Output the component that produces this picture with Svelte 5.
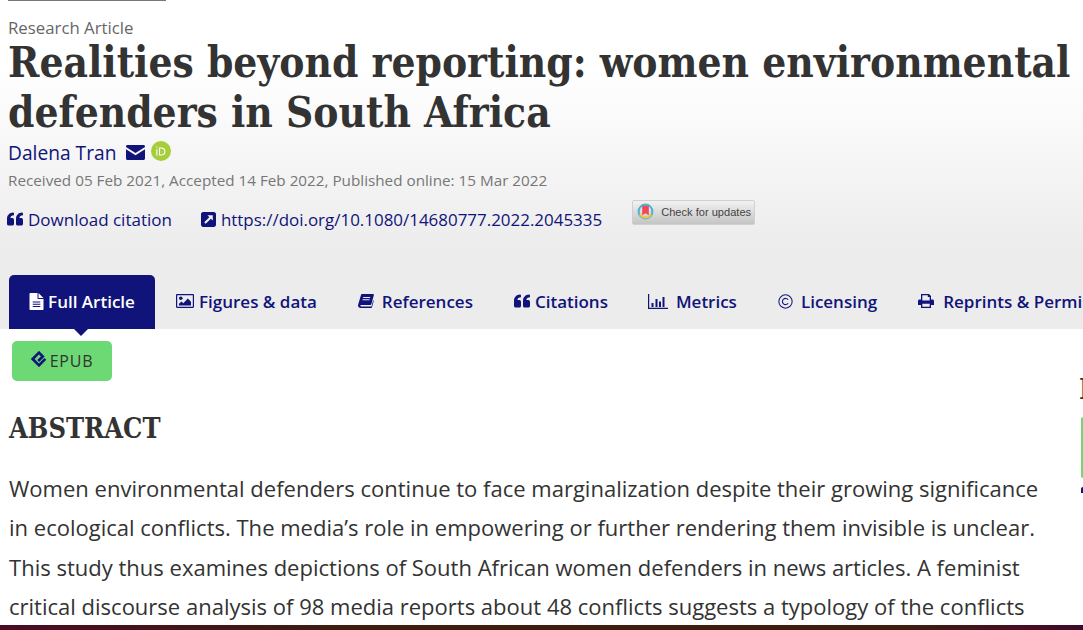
<script>
  const tabs = [
    { label: 'Figures & data', icon: 'image' },
    { label: 'References', icon: 'book' },
    { label: 'Citations', icon: 'quote' },
    { label: 'Metrics', icon: 'chart' },
    { label: 'Licensing', icon: 'copy' },
    { label: 'Reprints & Permissions', icon: 'print' }
  ];
</script>

{#snippet icon(name)}
  {#if name === 'quote'}
    <svg class="ico quote" viewBox="0 0 16 12" preserveAspectRatio="none"><path d="M7 1.500v1.200C4.800 2.700 3.400 3.600 3.400 5.200H5.400C6.300 5.200 7 5.900 7 6.800V10c0 .9-.7 1.600-1.600 1.600H1.600C.7 11.600 0 10.900 0 10V5.600C0 3 2.600 .4 6 .4 6.600 .4 7 .9 7 1.500ZM16 1.500v1.200C13.800 2.700 12.400 3.600 12.400 5.200H14.400C15.300 5.200 16 5.900 16 6.800V10c0 .9-.7 1.600-1.600 1.600H10.600C9.700 11.600 9 10.900 9 10V5.600C9 3 11.600 .4 15 .4 15.600 .4 16 .9 16 1.500Z"/></svg>
  {:else if name === 'image'}
    <svg class="ico image" viewBox="0 0 18 14"><path fill-rule="evenodd" d="M1.200 0H16.800C17.500 0 18 .5 18 1.200V12.800C18 13.500 17.500 14 16.800 14H1.200C.5 14 0 13.500 0 12.800V1.200C0 .5 .5 0 1.200 0ZM1.200 1.200V12.800H16.800V1.200Z"/><circle cx="4.800" cy="4.200" r="1.800"/><path d="M3 11.500V9.800L5.500 7.500 7.300 9.200 11.800 4.400 15 7.800V11.500Z"/></svg>
  {:else if name === 'book'}
    <svg class="ico book" viewBox="0 0 16 14"><path d="M4.300 0H15C15.700 0 16 .5 15.800 1.200L13.400 10.200C13.200 10.800 12.900 11 12.300 11H3.200C2.600 11 2.300 11.300 2.300 11.800 2.300 12.300 2.700 12.600 3.200 12.600H13.500L15.200 6.200 15.800 6.800 13.900 13.500C13.800 13.800 13.600 14 13.300 14H2.600C1.200 14 0 13 0 11.600 0 11.200 .1 10.800 .2 10.400L2.900 1.200C3.100 .5 3.600 0 4.300 0ZM5.300 3 5 4H12L12.300 3ZM4.700 5.300 4.400 6.300H11.400L11.700 5.300Z" fill-rule="evenodd"/></svg>
  {:else if name === 'chart'}
    <svg class="ico chart" viewBox="0 0 20 15"><path d="M0 0H1.200V13.800H20V15H0ZM3.500 9H5.500V13H3.500ZM7.500 5H9.500V13H7.500ZM11 7.500H13V13H11ZM14.500 3H16.500V13H14.500Z"/></svg>
  {:else if name === 'copy'}
    <svg class="ico copy" viewBox="0 0 16 16"><circle cx="8" cy="8" r="7.100" fill="none" stroke="currentColor" stroke-width="1.100"/><path d="M10.800 6.200A3.300 3.300 0 1 0 10.800 9.800" fill="none" stroke="currentColor" stroke-width="1.200"/></svg>
  {:else if name === 'print'}
    <svg class="ico print" viewBox="0 0 16 14"><path fill-rule="evenodd" d="M3 0H11L13 2V5.500H14.500C15.300 5.500 16 6.200 16 7V11H13V14H3V11H0V7C0 6.200 .7 5.500 1.500 5.500H3ZM4.300 1.300V6.500H11.700V3H9.800V1.300ZM4.300 9.800V12.700H11.700V9.800Z"/></svg>
  {/if}
{/snippet}

<div class="page">
  <header class="head">
    <div class="topline"></div>
    <div class="kicker">Research Article</div>
    <h1>Realities beyond reporting: women environmental defenders in South Africa</h1>
    <div class="author">
      <span>Dalena Tran</span>
      <svg class="mail" viewBox="0 0 19 15"><path d="M1.500 0H17.500C18.300 0 19 .7 19 1.500V2L9.500 8 0 2V1.500C0 .7 .7 0 1.500 0ZM0 4.200 9.500 10.200 19 4.200V13.500C19 14.300 18.300 15 17.500 15H1.500C.7 15 0 14.300 0 13.500Z"/></svg>
      <svg class="orcid" viewBox="0 0 20 20">
        <circle cx="10" cy="10" r="10" fill="#a6ce39"/>
        <path d="M5.300 8.200H6.400V14.600H5.300ZM5.850 5.400A.7.7 0 1 1 5.850 6.800.7.7 0 0 1 5.850 5.400Z" fill="#fff"/>
        <path d="M8 6.400H10.300C12.700 6.400 14.500 8 14.500 10.500 14.500 12.900 12.700 14.600 10.300 14.600H8ZM9.100 7.400V13.600H10.200C12 13.600 13.300 12.400 13.300 10.500 13.300 8.600 12 7.400 10.200 7.400Z" fill="#fff" fill-rule="evenodd"/>
      </svg>
    </div>
    <div class="dates">Received 05 Feb 2021, Accepted 14 Feb 2022, Published online: 15 Mar 2022</div>
    <div class="links">
      <a class="dl" href="#top">{@render icon('quote')}Download citation</a>
      <a class="doi" href="#top">
        <svg class="ext" viewBox="0 0 14 14"><path fill-rule="evenodd" d="M2 0H12C13.100 0 14 .9 14 2V12C14 13.100 13.100 14 12 14H2C.9 14 0 13.100 0 12V2C0 .9 .9 0 2 0ZM6 3 7.800 4.800 3 9.600 4.400 11 9.200 6.200 11 8V3Z"/></svg>https://doi.org/10.1080/14680777.2022.2045335</a>
      <a class="crossmark" href="#top">
        <svg viewBox="0 0 18 18"><circle cx="9" cy="9" r="7.300" fill="none" stroke="#4fb4cf" stroke-width="2.200"/><path d="M3 12A7 7 0 0 0 15 12" fill="none" stroke="#f2c53d" stroke-width="2.200"/><path d="M5.500 3H12.500V13L9 10.800 5.500 13Z" fill="#ef4a5a"/></svg>
        <span>Check for updates</span>
      </a>
    </div>
    <nav class="tabs">
      <a class="tab active" href="#top">
        <svg class="ico file" viewBox="0 0 14 17"><path fill-rule="evenodd" d="M0 1C0 .4 .4 0 1 0H8V5C8 5.600 8.400 6 9 6H14V16C14 16.600 13.600 17 13 17H1C.4 17 0 16.600 0 16ZM3.200 8.500V9.500H10.800V8.500ZM3.200 10.800V11.800H10.800V10.800ZM3.200 13.100V14.100H10.800V13.100ZM9 0 14 5H9Z"/></svg>
        Full Article
      </a>
      {#each tabs as t}
        <a class="tab" href="#top">{@render icon(t.icon)}{t.label}</a>
      {/each}
    </nav>
  </header>

  <main class="body">
    <a class="epub" href="#top">
      <svg viewBox="0 0 16 16"><path d="M14.300 7.800 8 14.300 1.700 8 8 1.700 11.800 5.500 7.200 10" fill="none" stroke="#10137a" stroke-width="2.600"/></svg>
      EPUB
    </a>
    <h2>ABSTRACT</h2>
    <p>Women environmental defenders continue to face marginalization despite their growing significance in ecological conflicts. The media’s role in empowering or further rendering them invisible is unclear. This study thus examines depictions of South African women defenders in news articles. A feminist critical discourse analysis of 98 media reports about 48 conflicts suggests a typology of the conflicts</p>
  </main>

  <aside class="peek">
    <span class="peek-i">I</span>
    <span class="peek-green"></span>
    <span class="peek-navy"></span>
  </aside>
  <div class="footbar"></div>
</div>

<style>
  :global(body) {
    margin: 0;
    background: #fff;
  }

  .page {
    position: relative;
    width: 1083px;
    height: 630px;
    overflow: hidden;
    font-family: "Open Sans", sans-serif;
    color: #333;
  }

  .head {
    height: 329px;
    box-sizing: border-box;
    padding: 0 0 0 8px;
    background: linear-gradient(to bottom, #fff 70px, #ececec 250px);
    display: flex;
    flex-direction: column;
  }

  .topline {
    width: 158px;
    height: 1px;
    background: #777;
    margin-bottom: 17px;
    flex: none;
  }

  .kicker {
    font-size: 16.800px;
    line-height: 20px;
    color: #666;
  }

  h1 {
    margin: 0;
    width: 1075px;
    font-family: "DejaVu Serif Condensed", "DejaVu Serif", serif;
    font-weight: 700;
    font-size: 42px;
    line-height: 50px;
    color: #333;
  }

  .author {
    display: flex;
    align-items: center;
    margin-top: 1px;
    height: 26px;
    font-size: 19.200px;
    color: #10137a;
  }

  .mail {
    width: 19px;
    height: 15px;
    margin-left: 10px;
    fill: #10137a;
  }

  .orcid {
    width: 20px;
    height: 20px;
    margin-left: 6px;
    margin-top: -3px;
  }

  .dates {
    margin-top: 5px;
    font-size: 15.250px;
    line-height: 20px;
    color: #777;
  }

  .links {
    display: flex;
    align-items: center;
    margin-top: 13px;
    margin-left: -1px;
    height: 32px;
    white-space: nowrap;
  }

  .links a {
    color: #10137a;
    text-decoration: none;
    font-size: 17px;
    display: flex;
    align-items: center;
  }

  .dl {
    margin-right: 29px;
  }

  .links .doi {
    font-size: 16.950px;
  }

  .ext {
    width: 15px;
    height: 15px;
    fill: #10137a;
    margin-right: 5px;
  }

  .links .crossmark {
    margin-left: 30px;
    margin-top: -13px;
    width: 123px;
    height: 25px;
    box-sizing: border-box;
    padding: 0 0 2px 4px;
    gap: 7px;
    border: 1px solid #d0d0d0;
    border-radius: 2px;
    background: linear-gradient(to bottom, #f2f2f2, #c4c4c4);
    font-family: "Liberation Sans", sans-serif;
    font-size: 11.100px;
    color: #444;
  }

  .crossmark svg {
    width: 17px;
    height: 17px;
    flex: none;
  }

  .crossmark span {
    white-space: nowrap;
  }

  .tabs {
    display: flex;
    margin-top: 40px;
    height: 54px;
    white-space: nowrap;
  }

  .tab {
    display: flex;
    flex: none;
    align-items: center;
    height: 54px;
    box-sizing: border-box;
    padding-bottom: 2px;
    font-size: 17px;
    font-weight: 600;
    color: #10137a;
    text-decoration: none;
    margin-right: 41px;
    position: relative;
  }

  .tab:nth-child(4) {
    margin-right: 40px;
  }

  .tab.active {
    width: 146px;
    justify-content: center;
    margin-left: 1px;
    margin-right: 21px;
    background: #10137a;
    color: #fff;
    border-radius: 5px 5px 0 0;
  }

  .tab.active::after {
    content: "";
    position: absolute;
    left: 65px;
    bottom: -7px;
    border-left: 7px solid transparent;
    border-right: 7px solid transparent;
    border-top: 7px solid #10137a;
  }

  .ico {
    fill: #10137a;
    flex: none;
  }

  .ico.file {
    width: 15px;
    height: 17px;
    fill: #fff;
    margin-right: 4px;
  }

  .quote {
    width: 16px;
    height: 14px;
    margin-right: 5px;
  }

  .image {
    width: 18px;
    height: 14px;
    margin-right: 5px;
  }

  .book {
    width: 16px;
    height: 14px;
    margin-right: 8px;
  }

  .chart {
    width: 20px;
    height: 15px;
    margin-right: 8px;
  }

  .copy {
    width: 15px;
    height: 15px;
    margin-right: 8px;
    color: #10137a;
    fill: none;
  }

  .print {
    width: 16px;
    height: 14px;
    margin-right: 9px;
  }

  .body {
    padding: 12px 0 0 9px;
    width: 1041px;
  }

  .epub {
    display: flex;
    align-items: center;
    justify-content: center;
    gap: 3px;
    margin-left: 3px;
    width: 100px;
    height: 40px;
    background: #6cd975;
    border-radius: 5px;
    color: #333;
    text-decoration: none;
    font-size: 16px;
    letter-spacing: 0.800px;
  }

  .epub svg {
    width: 16px;
    height: 16px;
    margin-top: -4px;
  }

  h2 {
    margin: 30px 0 0;
    font-family: "DejaVu Serif Condensed", "DejaVu Serif", serif;
    font-weight: 700;
    font-size: 27px;
    line-height: 36px;
    color: #333;
  }

  p {
    margin: 22px 0 0;
    font-size: 22.030px;
    line-height: 39.300px;
    color: #333;
  }

  .peek {
    position: absolute;
    left: 1081px;
    top: 378px;
    width: 2px;
  }

  .peek span {
    display: block;
    position: absolute;
    left: 0;
  }

  .peek .peek-i {
    left: -2px;
    top: 0;
    font-family: "DejaVu Serif Condensed", "DejaVu Serif", serif;
    font-size: 27px;
    font-weight: 700;
    line-height: 24px;
    color: #333;
  }

  .peek-green {
    top: 39px;
    width: 2px;
    height: 61px;
    background: #6cd975;
    border-radius: 2px 0 0 2px;
  }

  .peek-navy {
    top: 109px;
    width: 2px;
    height: 6px;
    background: #10137a;
    border-radius: 2px 0 0 0;
  }

  .footbar {
    position: absolute;
    left: 0;
    right: 0;
    bottom: 0;
    height: 5px;
    background: linear-gradient(to right, #4a0c22, #3d1c12 30%, #3d1c12 85%, #470e22 95%, #3a0c2c);
  }
</style>
